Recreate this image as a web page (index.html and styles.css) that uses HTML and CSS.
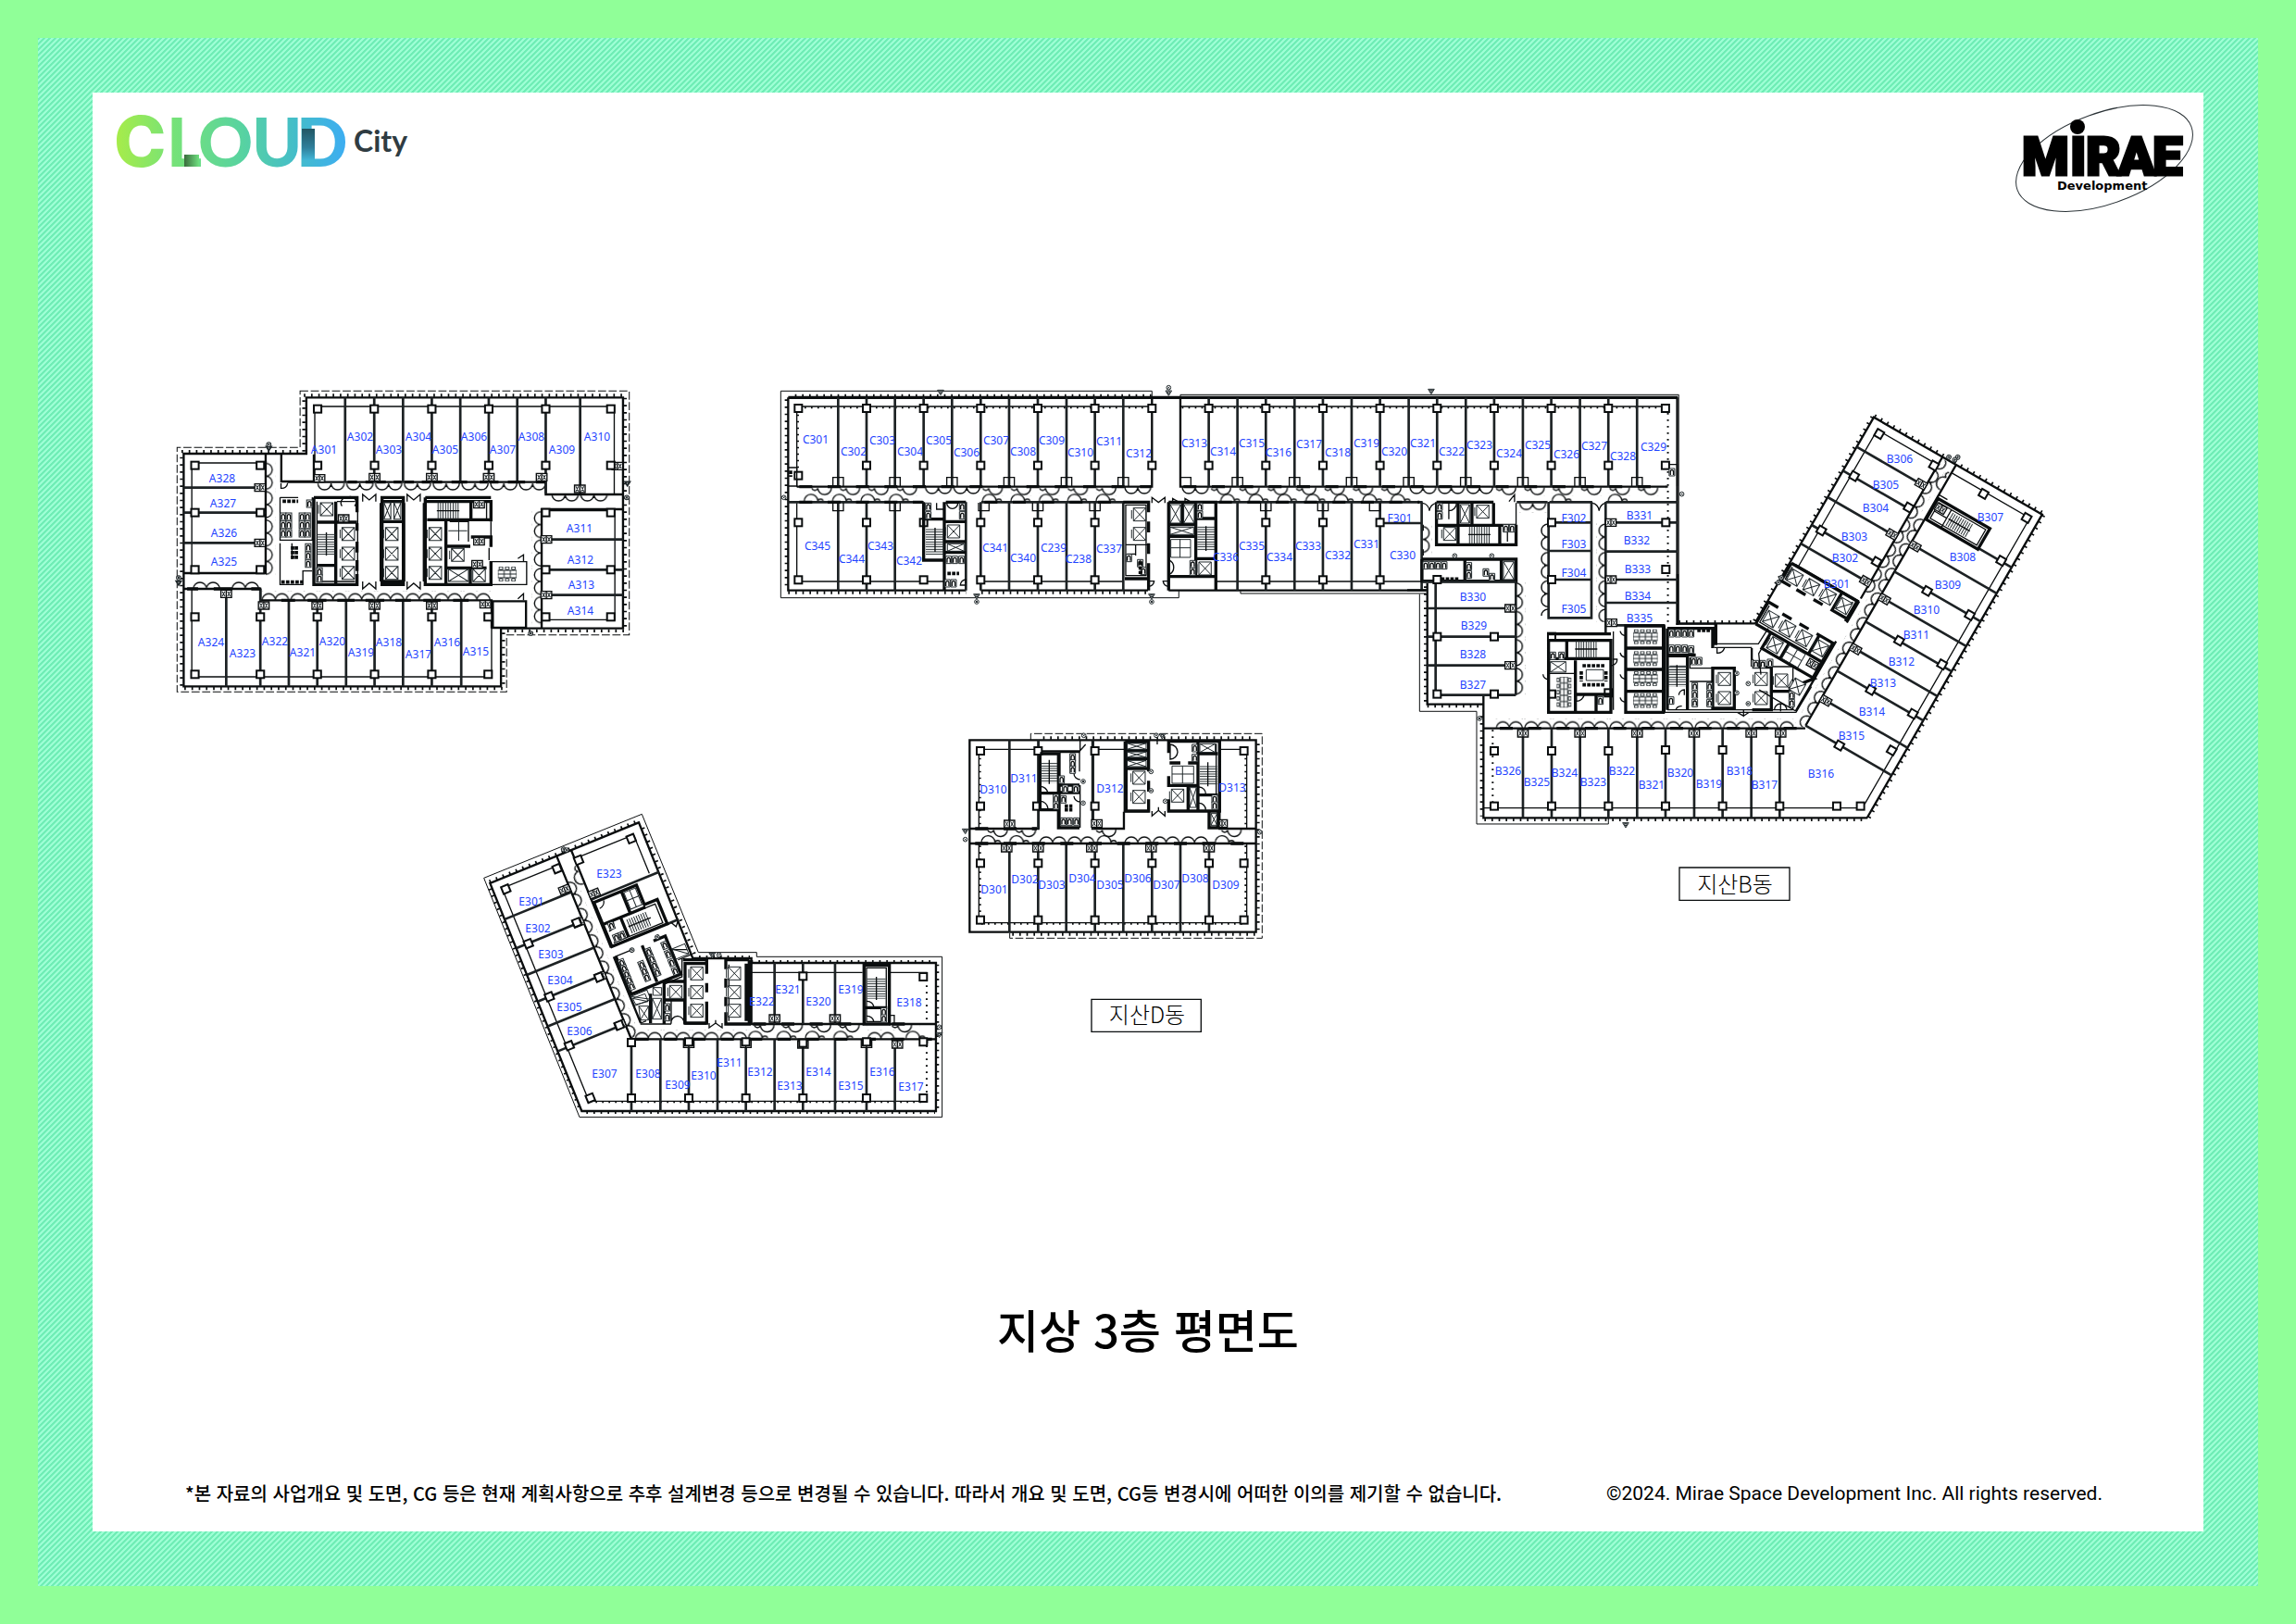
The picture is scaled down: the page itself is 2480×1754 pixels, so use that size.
FILE: index.html
```html
<!DOCTYPE html>
<html lang="ko">
<head>
<meta charset="utf-8">
<meta name="viewport" content="width=device-width, initial-scale=1">
<title>CLOUD City - 지상 3층 평면도</title>
<link rel="stylesheet" href="styles.css">
</head>
<body>
<div class="frame">
<main class="sheet">
<header class="brands">
<svg class="brand-cloud" viewBox="120 108 330 130" role="img" aria-label="CLOUD City">
<defs>
<linearGradient id="cloudFill" gradientUnits="userSpaceOnUse" x1="126" y1="0" x2="371" y2="0">
<stop offset="0" stop-color="#a6ec4a"/><stop offset=".25" stop-color="#76e278"/><stop offset=".55" stop-color="#58d3a0"/><stop offset=".8" stop-color="#43bccb"/><stop offset="1" stop-color="#3daef0"/>
</linearGradient>
<linearGradient id="foldL"><stop offset="0" stop-color="#3a6b3c"/><stop offset="1" stop-color="#6fe080"/></linearGradient>
<linearGradient id="foldD" x2="0" y2="1"><stop offset="0" stop-color="#215663"/><stop offset=".6" stop-color="#2f7f9b"/><stop offset="1" stop-color="#42b6d8"/></linearGradient>
</defs>
<text class="cloud-word" x="123 180 214 272 320" y="180" fill="url(#cloudFill)"><tspan class="wide">C</tspan>LOUD</text>
<rect x="199" y="167" width="16" height="13" fill="url(#foldL)"/>
<rect x="326" y="139" width="14" height="34" fill="url(#foldD)"/>
<text class="city-word" x="382" y="164">City</text>
</svg>
<svg class="brand-mirae" viewBox="2172 108 200 130" role="img" aria-label="MIRAE Development">
<ellipse class="orbit" cx="2273" cy="171" rx="100" ry="49" transform="rotate(-20 2273 171)"/>
<text class="mirae-word" x="2184 2236 2253 2288 2325" y="189">MIRAE</text>
<circle cx="2244" cy="137" r="8"/>
<text class="mirae-sub" x="2222" y="205">Development</text>
</svg>
</header>

<svg class="plan" viewBox="100 260 2280 1000" role="img" aria-label="지상 3층 평면도">
<defs>
<marker id="col" markerUnits="userSpaceOnUse" markerWidth="40" markerHeight="40" overflow="visible"><rect x="-12" y="-12" width="24" height="24" class="column"/></marker>
<marker id="shaft" markerUnits="userSpaceOnUse" markerWidth="40" markerHeight="40" overflow="visible"><path class="mid box" d="M-17-12H17V12H-17ZM0-12V12"/><path class="thin" d="M-13-8L-4 8M-4-8L-13 8M4-8L13 8M13-8L4 8"/></marker>
<marker id="nook" markerUnits="userSpaceOnUse" markerWidth="40" markerHeight="40" overflow="visible"><path class="mid" d="M-17 15V-13H17V15"/></marker>
<marker id="nookd" markerUnits="userSpaceOnUse" markerWidth="40" markerHeight="40" overflow="visible"><path class="mid" d="M-17-13V13H17V-13"/></marker>
<marker id="lift" markerUnits="userSpaceOnUse" markerWidth="60" markerHeight="60" overflow="visible"><path class="thin box" d="M-20-21H20V21H-20ZL20 21M20-21L-20 21M-26-14V14"/></marker>
<marker id="wc" markerUnits="userSpaceOnUse" markerWidth="40" markerHeight="40" overflow="visible"><path class="thin box" d="M-9-12H9V12H-9Z"/><path class="mid" d="M-5 9V-1A5 6 0 0 1 5-1V9"/></marker>
<marker id="gate" markerUnits="userSpaceOnUse" markerWidth="40" markerHeight="40" overflow="visible"><path class="thin box" d="M-10-8H10L0 8ZM-5-5H5L0 3Z"/></marker>
<marker id="valve" markerUnits="userSpaceOnUse" markerWidth="40" markerHeight="40" overflow="visible"><path class="thin box" d="M-7 0A7 7 0 1 1 7 0A7 7 0 1 1-7 0M-3-3L3 3M3-3L-3 3"/></marker>
<pattern id="dn" patternUnits="userSpaceOnUse" width="92" height="30"><path class="door" d="M3 0A21 21 0 0 0 45 0A21 21 0 0 0 87 0"/></pattern>
<pattern id="up" patternUnits="userSpaceOnUse" width="92" height="30"><path class="door" d="M3 30A21 21 0 0 1 45 30A21 21 0 0 1 87 30"/></pattern>
<pattern id="dns" patternUnits="userSpaceOnUse" width="92" height="30"><path class="door" d="M3 5A10 10 0 0 0 22 5A22 22 0 0 0 66 2"/></pattern>
<pattern id="ups" patternUnits="userSpaceOnUse" width="92" height="30"><path class="door" d="M6 28A22 22 0 0 1 50 26A10 10 0 0 1 68 26"/></pattern>
<pattern id="stH" patternUnits="userSpaceOnUse" width="8" height="8"><path class="thin" d="M0 4H8"/></pattern>
<pattern id="stV" patternUnits="userSpaceOnUse" width="8" height="8"><path class="thin" d="M4 0V8"/></pattern>
<pattern id="seats" patternUnits="userSpaceOnUse" width="20" height="48"><path class="thin" d="M4 5A6 5 0 1 1 16 5A6 5 0 1 1 4 5M4 43A6 5 0 1 1 16 43A6 5 0 1 1 4 43M0 12H20V36H0M0 24H20M0 12V36"/></pattern>
</defs>

<!-- Building A -->
<g transform="translate(170 400) scale(.338 .3333)">
<path class="eave dash" d="M456 67H1508V857H1116V1042H63V250H456Z"/>
<path class="fins" d="M468 81H1495V844H1106V1031H77V263H468Z"/>
<path class="wall" d="M476 88H1488V836H1098V1024H84V270H476Z"/>
<path class="mid" d="M503 362V117H1460V400M110 708V993H1068V745M344 300H110V656M1228 455H1462V808H1228"/>
<path class="wall" d="M396 272V360H500V272M415 362H1241V402H1488M346 270V657H84M84 708H329V745H1068V836M1072 748H1178V834H1072ZM1488 450H1228V836"/>
<path class="part" d="M600 88V362M693 88V362M785 88V362M877 88V362M968 88V362M1059 88V362M1150 88V362M1241 88V400M1351 88V400M220 708V1024M329 708V1024M420 745V1024M511 745V1024M603 745V1024M694 745V1024M785 745V1024M877 745V1024M971 745V1024M84 380H346M84 461H346M84 559H346M1228 548H1488M1228 646H1488M1228 728H1488"/>
<path class="pile" d="M608 362H638M665 362H690M700 362H730M755 362H780M790 362H820M845 362H872M880 362H910M940 362H990M1030 362H1055M1062 362H1090M1120 362H1175M1210 362H1240M396 745H440M480 745H510M515 745H540M575 745H630M665 745H690M700 745H725M760 745H810M850 745H875M880 745H905M945 745H995M95 708H130M180 708H240M300 708H330"/>
<path class="m-shaft" d="M518 350L694 346L877 346L1059 346L1228 346L1350 384L220 724L340 762L511 762L694 762L877 762L1048 758L328 380L328 559L1243 548L1243 728L1470 310"/>
<path class="m-col" d="M512 125L693 125L877 125L1059 125L1241 125L1449 125L512 308L694 308L877 308L1059 308L1241 308L1449 308L120 308L329 308L120 461L329 461L120 646L329 646L1241 461L1449 461L1241 646L1449 646L1241 799L1449 799L120 799L329 799L511 799L694 799L877 799L1057 799L120 985L329 985L511 985L694 985L877 985L1057 985"/>
<rect transform="translate(510 366)" width="728" height="30" fill="url(#dn)"/>
<rect transform="translate(1258 402)" width="184" height="30" fill="url(#dn)"/>
<rect transform="translate(332 715)" width="736" height="30" fill="url(#up)"/>
<rect transform="translate(112 678)" width="92" height="30" fill="url(#up)"/>
<rect transform="translate(236 678)" width="92" height="30" fill="url(#up)"/>
<rect transform="translate(346 664) rotate(-90)" width="368" height="30" fill="url(#dn)"/>
<rect transform="translate(1226 455) rotate(90)" width="368" height="30" fill="url(#dn)"/>
<path class="thick" d="M500 412H638V430M638 412V460M638 495V520M638 555V590M638 615V650M500 412V694H638V660M570 425V694M512 492H638M512 632H570M718 412H786V694H718ZM718 425H786M718 490H786M718 684H786M856 425H1066V490M856 412H1066M856 412V694H1066V618M862 484H1066M922 484V694M922 570H1000M922 640H1052M1002 425V484M1000 640V694M1002 540H1066V572"/>
<path class="mid" d="M510 425V684H632M574 425H632M640 430V684M712 430V684M790 430V684M850 430V684M392 412V550H495V412M392 412H450M392 560V694H465V650H495M430 560V612M392 550H495M1068 620H1180V694H1068ZM934 490H994V555M1066 490V540M1060 575V615M1052 425V484M590 440A18 18 0 0 1 608 412A18 18 0 0 1 630 440M656 425V402L677 420L698 402V425M798 425V402L819 420L840 402V425M656 684V708L677 690L698 708V684M798 684V708L819 690L840 708V684M395 366V382A18 18 0 0 0 416 366M1152 610L1170 598V618M1152 740L1170 724V745"/>
<path class="m-lift" d="M610 530L610 594L610 656L749 530L749 594L749 656L888 530L888 594L888 656L541 450L960 598L1028 664"/>
<path class="thin" d="M724 428H746V482H724ZL746 482M746 428L724 482M756 428H778V482H756ZL778 482M778 428L756 482M930 644H994V684H930ZL994 684M994 644L930 684M930 520H990M963 490V552"/>
<path class="m-shaft" d="M595 480L1028 434L1028 554L1022 628"/>
<path class="m-wc" d="M402 474L420 474L402 500L420 500L402 528L420 528L462 474L480 474L462 500L480 500L462 528L480 528L482 574L482 600L482 626L518 652L518 674L486 432"/>
<path class="beads" d="M400 424H450M396 686H465M432 570V612M444 570V612"/>
<rect transform="translate(893 428)" width="72" height="54" fill="url(#stV)"/><path class="mid" d="M893 455H965M540 525V600"/>
<rect transform="translate(510 528)" width="60" height="72" fill="url(#stH)"/>
<rect transform="translate(1088 636)" width="60" height="48" fill="url(#seats)"/>
<path class="m-gate" d="M356 254L68 690L1502 368"/><path class="m-valve" d="M356 240L68 672L1500 412L1193 852"/>
</g>

<!-- Building C and the link to B -->
<g transform="translate(830 400) scale(.3333)">
<path class="eave" d="M1243 84V67H40V737H1330V715M1335 84V79H2950V820M1530 715V723H2130"/>
<path class="fins" d="M86 82H1243M58 94V713M64 720H640M690 720H1230"/>
<path class="thick" d="M64 88H2947"/>
<path class="wall" d="M64 88V713H640M688 713H1230M1297 713H2131M2945 88V820M92 377H1243V88M1335 88V377H2915"/>
<path class="mid" d="M92 377V117H1243M1335 117H2915M92 430V684H570M688 684H1150M1450 684H2117"/>
<path class="facade" d="M2915 117V820M96 122V340M96 121H1243M1340 121H2910"/>
<path class="part" d="M64 427H503M690 427H1160M1454 427H2120M2425 427H2525M2531 427H2670M2714 427H2947M226 88V377M318 88V377M410 88V377M503 88V377M595 88V377M688 88V377M780 88V377M873 88V377M966 88V377M1058 88V377M1150 88V377M1427 88V377M1520 88V377M1612 88V377M1705 88V377M1797 88V377M1890 88V377M1982 88V377M2075 88V377M2167 88V377M2260 88V377M2352 88V377M2445 88V377M2537 88V377M2630 88V377M2722 88V377M2815 88V377M226 427V713M318 427V713M410 427V713M640 427V713M688 427V713M780 427V713M873 427V713M966 427V713M1058 427V713M1150 427V713M1520 427V713M1612 427V713M1705 427V713M1797 427V713M1890 427V713M1982 427V713M2117 427V713M1982 495H2117"/>
<path class="pile dashpile" d="M100 377H1240M1345 377H2910M100 427H500M700 427H1150M1460 427H2110"/>
<path class="m-nook" d="M226 360L410 360L595 360L780 360L966 360L1150 360L1352 360L1520 360L1705 360L1890 360L2075 360L2260 360L2445 360L2630 360L2815 360"/>
<path class="m-nookd" d="M226 442L410 442L698 442L873 442L1058 442L1612 442L1797 442L1965 442"/>
<path class="m-col" d="M97 123L318 123L503 123L688 123L873 123L1058 123L1243 123L1427 123L1612 123L1797 123L1982 123L2167 123L2352 123L2537 123L2722 123L2907 123L97 341L318 308L503 308L688 308L873 308L1058 308L1243 308L1427 308L1612 308L1797 308L1982 308L2167 308L2352 308L2537 308L2722 308L2907 308L97 493L318 493L503 493L688 493L873 493L1058 493L1612 493L1797 493L1982 493L97 679L318 679L503 679L688 679L873 679L1058 679L1612 679L1797 679L1982 679"/>
<rect transform="translate(138 377)" width="368" height="30" fill="url(#dns)"/>
<rect transform="translate(506 378)" width="184" height="30" fill="url(#dn)"/>
<rect transform="translate(692 377)" width="460" height="30" fill="url(#dns)"/>
<rect transform="translate(1152 378)" width="92" height="30" fill="url(#dn)"/>
<rect transform="translate(1338 378)" width="92" height="30" fill="url(#dn)"/>
<rect transform="translate(1432 377)" width="644" height="30" fill="url(#dns)"/>
<rect transform="translate(2076 378)" width="276" height="30" fill="url(#dn)"/>
<rect transform="translate(2356 377)" width="552" height="30" fill="url(#dns)"/>
<rect transform="translate(110 397)" width="368" height="30" fill="url(#ups)"/>
<rect transform="translate(688 397)" width="460" height="30" fill="url(#ups)"/>
<rect transform="translate(1460 397)" width="644" height="30" fill="url(#ups)"/>
<rect transform="translate(2534 397)" width="92" height="30" fill="url(#ups)"/>
<rect transform="translate(2716 397)" width="92" height="30" fill="url(#ups)"/>
<path class="thick" d="M503 427V615H570M570 427V713M508 482H570M575 427H640M575 490H640M575 555H640M575 590H640M1150 427H1232V460M1232 490V525M1232 560V595M1232 625V675H1155M1297 427H1450V713M1297 427V713M1297 500H1385M1297 538H1385M1385 427V668M1342 430V500M1385 480H1445M1385 610H1450M1297 668H1450M1232 675V713M2165 427H2350M2165 427V565H2423V500M2235 427V565M2280 427V500M2165 502H2423M2350 430V500M2370 502V565M2118 612H2423V683H2118V612M2257 612V683M2375 612V683"/>
<path class="mid" d="M1158 436H1224V665H1158ZM1158 565H1228M1190 565V600M1162 595H1190M66 315H92V375H66M2918 305H2945V375M2423 430V500M1243 430V412L1264 428L1285 412V430M1310 427V415L1330 427M1350 427V415L1370 427M2120 430A26 28 0 0 1 2142 455A26 28 0 0 1 2165 430M2400 425L2418 403V427M2670 430A24 28 0 0 1 2692 455A24 28 0 0 1 2714 430M545 430V450H570M578 430A18 18 0 0 0 596 448A18 18 0 0 0 614 430M1297 615A25 25 0 0 1 1297 662M640 690V678A18 18 0 0 0 622 696H640M2205 482V430M2205 455A25 25 0 0 0 2230 430M2395 555V520M1232 700A18 18 0 0 0 1250 683H1232M1297 700A18 18 0 0 1 1279 683H1297"/>
<path class="m-lift" d="M600 522L1203 467L1203 530L1415 642L2315 458L2208 530"/>
<path class="thin" d="M1302 435H1336V495H1302ZL1336 495M1336 435L1302 495M1346 435H1380V495H1346ZL1380 495M1380 435L1346 495M1302 508H1378V532H1302ZL1378 532M1378 508L1302 532M580 562H634V586H580ZL634 586M634 562L580 586M1304 548H1368V606H1304ZM1304 575H1368M1334 548V606M2242 435H2272V495H2242ZL2272 495M2272 435L2242 495M2382 620H2416V678H2382ZL2416 678M2416 620L2382 678"/>
<path class="m-wc" d="M518 442L518 470L628 442L628 470L584 614L604 614L626 614L580 690L600 690L1168 608L1205 625L1215 650L1398 442L1398 468L1375 628L1375 652L2175 442L2175 470L2130 632L2150 632L2170 632L2190 632L2270 635L2270 662L2390 512L2410 512L2325 655L2345 670L2928 330"/>
<path class="beads" d="M580 658H618M2165 676H2240M1205 620V660M72 325V345"/>
<rect transform="translate(510 512)" width="58" height="88" fill="url(#stH)"/><rect transform="translate(1390 504)" width="56" height="80" fill="url(#stH)"/><rect transform="translate(2268 506)" width="72" height="56" fill="url(#stV)"/>
<path class="mid" d="M540 510V588M1418 505V585M2268 532H2340M2122 500V520M2122 580V600"/>
<rect transform="translate(2120 503) rotate(90) scale(1 -1)" width="92" height="30" fill="url(#dn)"/>
<rect transform="translate(2432 430)" width="92" height="30" fill="url(#dn)"/>
<path class="m-gate" d="M558 72L1297 74L2148 69L675 733L1242 733"/><path class="m-valve" d="M1297 56L675 750L1242 750L2960 401L50 412"/>
</g>

<!-- Building B, lower wing -->
<g transform="translate(1520 520) scale(.3333)">
<path class="eave" d="M40 365V745H225V1110H652V1090"/>
<path class="fins" d="M59 340V722M65 728H240M241 760V1085M250 1096H1490M880 455H1130"/>
<path class="wall" d="M65 330V722H247M247 692V1090H1492M876 460H1130M876 300V465M250 800H1290M0 352H65"/>
<path class="part" d="M643 66V495M643 133H876M643 227H876M643 318H876M643 393H876M643 466H835M458 66V442H597V66M458 133H597M458 225H597M458 318H597M352 325V692M50 325H352M65 411H352M65 503H352M65 596H352M92 692H352M92 325V692M375 800V1090M468 800V1090M560 800V1090M652 800V1090M745 800V1090M837 800V1090M930 800V1090M1022 800V1090M1115 800V1090M1207 800V1090"/>
<path class="mid" d="M247 1058H1480"/><path class="facade" d="M277 805V1050"/>
<path class="pile dashpile" d="M300 800H1280"/>
<path class="m-shaft" d="M334 411L334 596L375 816L560 816L745 816L930 816L1115 816L1210 816L660 133L660 318L662 458"/>
<path class="m-col" d="M468 133L468 318L838 133L838 285L97 318L97 503L282 503L97 689L282 689L468 503L468 689L652 685L282 873L468 873L652 873L837 870L1022 870L1207 870L282 1052L468 1052L652 1052L837 1052L1022 1052L1207 1052L1392 1052L1469 1052"/>
<rect transform="translate(286 770)" width="966" height="30" fill="url(#up)"/>
<rect transform="translate(352 692) rotate(-90)" width="368" height="30" fill="url(#dn)"/>
<rect transform="translate(456 135) rotate(90)" width="300" height="30" fill="url(#dn)"/>
<rect transform="translate(643 135) rotate(90)" width="320" height="30" fill="url(#dn)"/>
<path class="thick" d="M458 494H660M458 515H660V748H458V515M460 574H660M545 580V748M545 690H660M517 515V574M612 690V748M708 468V748H830V468ZM708 540H830M708 609H830M708 680H830M843 476H990V540M843 476V740M843 562H935M908 562V740M990 605H1060V735H990ZM1118 602H1180V740H1118M1180 602V740M1185 680H1250M1000 462V530"/>
<path class="mid" d="M835 466V748H1260L1310 665M843 740H1250M1002 465V526H1138L1170 476M995 538H1115V600M460 622H540M843 568H908M916 570V605H990M916 648H990M1004 540V556A24 24 0 0 0 1028 540M1118 540V575A34 34 0 0 0 1140 590M1182 600H1250V740M1090 740V760L1070 748M1090 760L1108 748M665 576H680A18 18 0 0 1 662 596M690 485A20 20 0 0 0 708 500M690 555A20 20 0 0 0 708 570M690 625A20 20 0 0 0 708 640M690 700A20 20 0 0 0 708 715M440 625A18 18 0 0 0 458 642M548 690V712A26 26 0 0 0 574 690M1210 745V720A20 20 0 0 0 1190 740M1210 720A20 20 0 0 1 1230 740M870 740A20 20 0 0 1 890 728M880 692A18 18 0 0 1 898 675V692M668 486V740M1000 462H870"/>
<path class="m-lift" d="M1028 640L1028 702L1147 640L1147 702L1213 645"/>
<path class="thin" d="M464 584H514V618H464ZL514 618M514 584L464 618M580 610H636V645H580ZM850 598H906M850 610H906"/>
<path class="m-wc" d="M856 492L877 492L899 492L920 492L856 542L877 542L899 542L920 545L932 664L932 690L932 718L980 664L980 690L980 718L928 582L946 582L855 710L626 710L1246 692L1246 718L472 565L500 565L1130 592L1152 592L1176 588"/>
<path class="beads" d="M940 483H985M568 597H640M568 659H640"/>
<path class="beads" d="M564 615V648M644 615V648"/>
<rect transform="translate(544 516)" width="72" height="56" fill="url(#stV)"/><rect transform="translate(845 598)" width="60" height="66" fill="url(#stH)"/><path class="mid" d="M544 543H616M874 595V665"/>
<rect transform="translate(732 479)" width="80" height="48" fill="url(#seats)"/><rect transform="translate(732 550)" width="80" height="48" fill="url(#seats)"/><rect transform="translate(732 615)" width="80" height="48" fill="url(#seats)"/><rect transform="translate(732 686)" width="80" height="48" fill="url(#seats)"/>
<rect transform="translate(532 633) rotate(90)" width="100" height="48" fill="url(#seats)"/>
<path class="m-gate" d="M708 1114"/><path class="m-valve" d="M234 768L154 241L274 241L1068 622L1068 685L1105 655L1105 720"/>
</g>

<!-- Building B, diagonal wing -->
<g transform="translate(2024 450.67) scale(.3333) rotate(30)">
<path class="fins" d="M0-6H630M636 0V1134M-6 765V0"/>
<path class="wall" d="M0 765V0H630V1134M257 0V530M308 0V976M257 540V620M257 690V951"/>
<path class="mid" d="M30 540V30H257M308 30H601V1100"/>
<path class="part" d="M0 111H257M0 200H257M0 299H257M0 403H257M0 473H257M506 198H630M308 295H630M308 400H630M308 493H630M308 587H630M308 680H630M308 771H630M308 873H630M308 976H630"/>
<path class="thick" d="M312 124H506V202H312ZM5 543H251V619M5 543V609H40M62 609H96M126 609H160M190 609H251M3 771V689H40M62 700H96M126 700H160M190 700H251V771H3M200 700V771M195 543V610M60 771V830H200M128 771V830M200 771H251V840M130 830H256L200 900"/>
<path class="mid" d="M322 134H496V192H322ZM14 552V600M240 552V600M12 698V760H190M368 134V200M322 165H368M308 200H506M310 112H340M257 540H20M60 790V850L100 905M257 951L120 951"/>
<path class="m-lift" d="M38 578L100 578L162 578L222 578L38 733L100 733L162 733L224 735L92 800L222 880"/>
<path class="thin" d="M132 776H192V826H132ZM132 800H192M162 776V826"/>
<path class="m-shaft" d="M241 111L241 299L243 473L324 295L324 493L324 680L324 873L228 792L336 148"/>
<path class="m-col" d="M42 38L247 38L40 197L244 197L36 403L242 401L432 37L592 35L590 196L590 400L592 583L590 769L590 906L431 401L433 586L433 770L435 977"/>
<rect transform="translate(374 140)" width="80" height="48" fill="url(#stV)"/><path class="mid" d="M374 164H454"/>
<rect transform="translate(257 505) rotate(-90)" width="500" height="30" fill="url(#dn)"/>
<rect transform="translate(306 205) rotate(90)" width="780" height="30" fill="url(#dn)"/>
<rect transform="translate(306 30) rotate(90)" width="92" height="30" fill="url(#dns)"/>
<path class="m-valve" d="M300-24L296-12L0 600L0 618L275-10"/>
</g>

<!-- Building D -->
<g transform="translate(1030 780) scale(.3333)">
<path class="eave dash" d="M250 60V37H1000V700H182V680"/>
<path class="fins" d="M290 51H975M987 70V680M190 687H980"/>
<path class="wall" d="M52 58H980V680H52ZM52 345H275V58M450 58V345H552V290M862 58V345H980M52 393H980M275 94H410"/>
<path class="mid" d="M82 345V88H275M82 393V650H950V393M455 88H552M862 88H950V345"/>
<path class="facade" d="M86 95V340M86 400V640M946 95V340M946 400V640M90 653H940"/>
<path class="part" d="M181 58V345M275 58V345M452 58V345M181 393V680M274 393V680M365 393V680M458 393V680M550 393V680M643 393V680M735 393V680M828 393V680"/>
<path class="pile dashpile" d="M70 393H970M70 345H270"/>
<path class="m-shaft" d="M181 330L172 408L274 408L448 408L640 408L828 408M464 328L870 328"/>
<path class="m-col" d="M87 93L274 93L458 93L941 93L87 272L270 272L458 272L87 457L274 457L458 457L643 457L828 457L941 457L87 641L274 641L458 641L643 641L828 641L941 641"/>
<rect transform="translate(108 345)" width="184" height="30" fill="url(#dns)"/><rect transform="translate(460 345)" width="92" height="30" fill="url(#dns)"/><rect transform="translate(866 345)" width="92" height="30" fill="url(#dns)"/>
<rect transform="translate(84 363)" width="184" height="30" fill="url(#ups)"/><rect transform="translate(276 363)" width="184" height="30" fill="url(#up)"/><rect transform="translate(460 363)" width="92" height="30" fill="url(#ups)"/><rect transform="translate(552 363)" width="276" height="30" fill="url(#up)"/><rect transform="translate(842 363)" width="92" height="30" fill="url(#ups)"/>
<path class="thick" d="M280 102H340V342H408M280 102V284H340M280 230H340M345 204H408M345 228H408M556 62H632V160M632 190V225M632 250V288H556V62M556 92H632M556 118H632M556 150H632M697 100V62H862V288H697V250M697 175V205H792M792 62V288M760 205V288M700 132H735M760 132H792M792 102H856M792 236H856M828 290V342H858V290"/>
<path class="mid" d="M345 98H408V160M410 204V342M345 98V342M410 60V92L428 72M562 288V68H626M552 290H632M643 288V304L664 286L685 304V288M664 286V275M702 72V120A25 25 0 0 0 726 97A25 25 0 0 0 702 72M851 70V282M390 166A20 20 0 0 0 410 186M390 240A20 20 0 0 0 410 258M280 208A26 26 0 0 1 306 230M280 256A26 26 0 0 1 306 280M795 210A22 22 0 0 1 817 234M795 262A22 22 0 0 1 817 284M385 228V205"/>
<path class="m-lift" d="M601 180L601 242L726 238"/>
<path class="thin" d="M562 68H624V88H562ZL624 88M624 68L562 88M562 96H624V114H562ZL624 114M624 96L562 114M562 124H624V144H562ZL624 144M624 124L562 144M765 212H787V276H765ZL787 276M787 212L765 276M798 70H848V98H798ZL848 98M848 70L798 98M834 296H854V334H834ZL854 334M854 296L834 334M708 142H778V198H708ZM708 168H778M742 142V198"/>
<path class="m-wc" d="M386 114L386 134L386 154L396 216L356 250L356 322L376 322L398 322L332 246L332 270L350 186L362 216L846 248L846 270L782 84L782 116"/>
<path class="beads" d="M360 272H385M360 284H385"/>
<rect transform="translate(282 130)" width="54" height="66" fill="url(#stH)"/><rect transform="translate(798 140)" width="56" height="64" fill="url(#stH)"/><path class="mid" d="M310 122V200M824 130V208M660 72V60"/>
<path class="m-gate" d="M38 354L676 46"/><path class="m-valve" d="M422 43L657 43L38 380L992 356L420 192L420 262L640 160L640 222L686 256"/>
<path class="tag" d="M447 898H802V1003H447Z"/>
</g>

<!-- Building E -->
<g transform="translate(510 860) scale(.3333)">
<path class="eave" d="M348 1040H1523V520H922V506H733L550 58L38 265Z"/>
<path class="fins" d="M370 1024H1500M1508 545V1016M905 536H1500M735 521H900"/>
<path class="wall" d="M355 1020H1503V540H905V525H715L540 85L58 282ZM905 525V738H1270M1350 738H1503M515 787H1503"/>
<path class="mid" d="M905 571H1265M1355 571H1475M395 988H1475M1475 787V800"/>
<path class="facade" d="M1473 571V738M1473 787V988M400 991H1470"/>
<path class="part" d="M980 540V738M1072 540V738M1176 540V738M516 787V1020M610 787V1020M702 787V1020M795 787V1020M887 787V1020M980 787V1020M1072 787V1020M1176 787V1020M1278 787V1020M1370 787V1020"/>
<path class="pile dashpile" d="M530 787H1490M910 738H1265M1360 738H1440"/>
<path class="m-shaft" d="M980 720L1176 720L702 802L887 802L1072 804L1278 802L1378 804"/>
<path class="m-col" d="M1072 583L1462 585L516 798L702 796L887 796L1072 800L1278 796L1462 796L516 978L702 978L887 978L1072 978L1278 978L1462 978"/>
<rect transform="translate(526 757)" width="368" height="30" fill="url(#up)"/><rect transform="translate(890 757)" width="368" height="30" fill="url(#ups)"/><rect transform="translate(1280 757)" width="92" height="30" fill="url(#up)"/><rect transform="translate(1400 757)" width="92" height="30" fill="url(#ups)"/>
<rect transform="translate(912 738)" width="368" height="30" fill="url(#dns)"/><rect transform="translate(1358 738)" width="92" height="30" fill="url(#dns)"/>
<path class="thick" d="M683 530H760V575M760 605V635M760 665V735H690V542H755M898 530V738H822V700M822 560V530H898M822 590V620M822 650V680M888 542V728M1270 542V738H1352V542M1270 548H1352M1270 685H1345M622 600V738M622 600H688M622 660H688M578 640L578 735"/>
<path class="mid" d="M680 525V585L620 610V735M545 738H645M688 738H760M768 735V750L789 735L810 750V735M789 735V725M1278 556H1342V730H1278ZM832 545V728M645 660V735M686 660V735M645 738A22 22 0 0 1 666 712A22 22 0 0 1 686 738M1280 712A22 22 0 0 1 1302 732M1280 664A22 22 0 0 1 1302 684M1354 710H1368V738"/>
<path class="m-lift" d="M728 574L728 635L728 695L850 574L850 635L850 695L660 634"/>
<path class="thin" d="M584 655H614V722H584ZL614 722M614 655L584 722M540 680H572V725H545ZL572 725M572 680L545 725M586 620H614V645H586ZL614 645M520 655L560 640L570 665L530 675ZL570 665"/>
<path class="m-wc" d="M632 684L632 716L1334 698L1334 720"/>
<rect transform="translate(1280 588)" width="60" height="68" fill="url(#stH)"/><path class="mid" d="M1310 585V660"/>
<path class="m-gate" d="M778 516L1514 774"/><path class="m-valve" d="M800 514L1514 748"/>
<g transform="translate(58 282) rotate(-22.2)">
<path class="fins" d="M0-6H521M-7 780V0M527 20V470"/>
<path class="wall" d="M233 0V638M284 0V341M281 372V604"/>
<path class="mid" d="M30 770V30H225M290 30H490V165"/>
<path class="part" d="M0 126H233M0 227H233M0 320H233M0 413H233M0 500H233M0 587H233M284 173H521M480 339H521"/>
<path class="thick" d="M288 185H437V253H482V339H288ZM384 185V262H437M288 262H384M350 262V330M288 373V506H461V373H420M380 373V500"/>
<path class="mid" d="M298 330H470V264H430M284 373H340M298 290A24 24 0 0 0 322 262M298 210A24 24 0 0 0 320 190M521 339L505 358L495 339M461 420L510 440M470 460H521M281 604L300 604"/>
<path class="thin" d="M390 192H430V250H390ZM390 220H430M410 192V250M465 420H510V455H465ZL510 455M284 512H340V545H284ZL340 545"/>
<rect transform="translate(362 276)" width="72" height="48" fill="url(#stV)"/><path class="mid" d="M362 300H440"/>
<path class="m-wc" d="M298 400L298 420L298 440L298 460L298 482L355 430L355 452L355 474L392 400L392 424L392 448L392 472L448 400L448 430L448 460L448 490L312 276L312 318L332 318"/>
<path class="m-shaft" d="M216 110L217 226L217 415L217 584L300 158"/>
<path class="m-col" d="M40 37L219 38L294 39L478 39L41 228L39 413L39 584L38 767L212 224L212 415L214 584"/>
<rect transform="translate(233 640) rotate(-90)" width="552" height="30" fill="url(#dn)"/>
<rect transform="translate(284 50) rotate(90)" width="92" height="30" fill="url(#dns)"/>
<path class="m-valve" d="M262-12L270-6L344 374L436 366"/>
</g>
</g>
<path class="tag" transform="translate(1814 937) scale(.3333)" d="M0 0H357V106H0Z"/>

<g class="tag-name"><text x="1239" y="1105">지산D동</text><text x="1874" y="964">지산B동</text></g>

<g class="unit">
<text x="350" y="490">A301</text><text x="389" y="476">A302</text><text x="420" y="490">A303</text><text x="452" y="476">A304</text><text x="481" y="490">A305</text><text x="512" y="476">A306</text><text x="543" y="490">A307</text><text x="574" y="476">A308</text><text x="607" y="490">A309</text><text x="645" y="476">A310</text>
<text x="626" y="575">A311</text><text x="627" y="609">A312</text><text x="628" y="636">A313</text><text x="627" y="664">A314</text><text x="514" y="708">A315</text><text x="483" y="698">A316</text><text x="452" y="711">A317</text><text x="420" y="698">A318</text><text x="390" y="709">A319</text><text x="359" y="697">A320</text><text x="327" y="709">A321</text><text x="297" y="697">A322</text><text x="262" y="710">A323</text><text x="228" y="698">A324</text><text x="242" y="611">A325</text><text x="242" y="580">A326</text><text x="241" y="548">A327</text><text x="240" y="521">A328</text>
<text x="881" y="479">C301</text><text x="922" y="492">C302</text><text x="953" y="480">C303</text><text x="983" y="492">C304</text><text x="1014" y="480">C305</text><text x="1044" y="493">C306</text><text x="1076" y="480">C307</text><text x="1105" y="492">C308</text><text x="1136" y="480">C309</text><text x="1167" y="493">C310</text><text x="1198" y="481">C311</text><text x="1230" y="494">C312</text>
<text x="883" y="594">C345</text><text x="920" y="608">C344</text><text x="951" y="594">C343</text><text x="982" y="610">C342</text><text x="1075" y="596">C341</text><text x="1105" y="607">C340</text><text x="1138" y="596">C239</text><text x="1165" y="608">C238</text><text x="1198" y="597">C337</text>
<text x="1290" y="483">C313</text><text x="1321" y="492">C314</text><text x="1352" y="483">C315</text><text x="1381" y="493">C316</text><text x="1414" y="484">C317</text><text x="1445" y="493">C318</text><text x="1476" y="483">C319</text><text x="1506" y="492">C320</text><text x="1537" y="483">C321</text><text x="1568" y="492">C322</text><text x="1598" y="485">C323</text><text x="1630" y="494">C324</text><text x="1661" y="485">C325</text><text x="1692" y="495">C326</text><text x="1722" y="486">C327</text><text x="1753" y="497">C328</text><text x="1786" y="487">C329</text>
<text x="1324" y="606">C336</text><text x="1352" y="594">C335</text><text x="1382" y="606">C334</text><text x="1413" y="594">C333</text><text x="1445" y="604">C332</text><text x="1476" y="592">C331</text><text x="1515" y="604">C330</text>
<text x="1512" y="564">F301</text><text x="1700" y="564">F302</text><text x="1700" y="592">F303</text><text x="1700" y="623">F304</text><text x="1700" y="662">F305</text>
<text x="1771" y="561">B331</text><text x="1768" y="588">B332</text><text x="1769" y="619">B333</text><text x="1769" y="648">B334</text><text x="1771" y="672">B335</text><text x="1591" y="649">B330</text><text x="1592" y="680">B329</text><text x="1591" y="711">B328</text><text x="1591" y="744">B327</text>
<text x="1629" y="837">B326</text><text x="1660" y="849">B325</text><text x="1690" y="839">B324</text><text x="1721" y="849">B323</text><text x="1752" y="837">B322</text><text x="1784" y="852">B321</text><text x="1815" y="839">B320</text><text x="1846" y="851">B319</text><text x="1879" y="837">B318</text><text x="1906" y="852">B317</text><text x="1967" y="840">B316</text>
<text x="2052" y="500">B306</text><text x="2037" y="528">B305</text><text x="2026" y="553">B304</text><text x="2003" y="584">B303</text><text x="1993" y="607">B302</text><text x="1984" y="635">B301</text><text x="2150" y="563">B307</text><text x="2120" y="606">B308</text><text x="2104" y="636">B309</text><text x="2081" y="663">B310</text><text x="2070" y="690">B311</text><text x="2054" y="719">B312</text><text x="2034" y="742">B313</text><text x="2022" y="773">B314</text><text x="2000" y="799">B315</text>
<text x="1074" y="965">D301</text><text x="1107" y="954">D302</text><text x="1136" y="960">D303</text><text x="1169" y="953">D304</text><text x="1199" y="960">D305</text><text x="1229" y="953">D306</text><text x="1260" y="960">D307</text><text x="1291" y="953">D308</text><text x="1324" y="960">D309</text><text x="1073" y="857">D310</text><text x="1106" y="845">D311</text><text x="1199" y="856">D312</text><text x="1331" y="855">D313</text>
<text x="574" y="978">E301</text><text x="581" y="1007">E302</text><text x="595" y="1035">E303</text><text x="605" y="1063">E304</text><text x="615" y="1092">E305</text><text x="626" y="1118">E306</text><text x="653" y="1164">E307</text><text x="700" y="1164">E308</text><text x="732" y="1176">E309</text><text x="760" y="1166">E310</text><text x="788" y="1152">E311</text><text x="821" y="1162">E312</text><text x="853" y="1177">E313</text><text x="884" y="1162">E314</text><text x="919" y="1177">E315</text><text x="953" y="1162">E316</text><text x="984" y="1178">E317</text><text x="982" y="1087">E318</text><text x="919" y="1073">E319</text><text x="884" y="1086">E320</text><text x="851" y="1073">E321</text><text x="823" y="1086">E322</text><text x="658" y="948">E323</text>
</g>
</svg>

<h1 class="title">지상 3층 평면도</h1>
<footer class="notes">
<p class="disclaimer">*본 자료의 사업개요 및 도면, CG 등은 현재 계획사항으로 추후 설계변경 등으로 변경될 수 있습니다. 따라서 개요 및 도면, CG등 변경시에 어떠한 이의를 제기할 수 없습니다.</p>
<p class="copyright">©2024. Mirae Space Development Inc. All rights reserved.</p>
</footer>
</main>
</div>
</body>
</html>
```
FILE: styles.css
```css
* { box-sizing: border-box; }

body {
  margin: 0;
  padding: 41px;
  background: #90ff98;
  color: #000;
  font-family: "Noto Sans CJK KR", "Noto Sans", sans-serif;
}

.frame {
  padding: 59px;
  background-color: #9cffd6;
  background-image: linear-gradient(135deg, #70edb6 0 17%, #9cffd4 17% 50%, #70edb6 50% 67%, #9cffd4 67%);
  background-size: 6px 6px;
}

.sheet {
  padding-bottom: 26px;
  background: #fff;
}

.brands {
  display: flex;
  justify-content: space-between;
  padding: 8px 8px 22px 20px;
}

.brand-cloud { width: 330px; height: 130px; }
.brand-mirae { width: 200px; height: 130px; }

.cloud-word { font: 900 73px Lato, sans-serif; }
.cloud-word .wide { font: 800 76px Inter, sans-serif; }

.city-word {
  font: 700 32px Lato, sans-serif;
  fill: #2f3c42;
}

.orbit { fill: none; stroke: #2a3236; stroke-width: 1px; }

.mirae-word {
  font: 900 58px Roboto, sans-serif;
  stroke: #000;
  stroke-width: 3px;
}

.mirae-sub { font: 700 13px "DejaVu Sans", sans-serif; }

.plan {
  display: block;
  width: 100%;
  height: auto;
}

.wall, .part, .mid, .thin, .thick, .eave, .fins, .facade, .pile, .door, .beads, .tag { fill: none; stroke: #0a0d0e; }
.wall { stroke-width: 7px; }
.part { stroke: #1d2224; stroke-width: 8px; }
.mid { stroke-width: 4px; }
.thin { stroke: #20282b; stroke-width: 3px; }
.thick { stroke-width: 10px; }
.eave { stroke-width: 3px; }
.dash { stroke-dasharray: 26 8; }
.fins { stroke-width: 10px; stroke-dasharray: 5 18; }
.facade { stroke-width: 6px; stroke-dasharray: 5 16; }
.pile { stroke-width: 10px; }
.dashpile { stroke-dasharray: 42 50; }
.door { stroke-width: 4px; }
.beads { stroke-width: 11px; stroke-dasharray: 11 4; }
.box { fill: #fff; }
.column { fill: #fff; stroke: #0a0d0e; stroke-width: 6px; }
.tag { stroke-width: 4px; }

.m-col, .m-shaft, .m-lift, .m-wc, .m-nook, .m-nookd, .m-gate, .m-valve { fill: none; stroke: none; }
.m-col { marker: url("#col"); }
.m-shaft { marker: url("#shaft"); }
.m-lift { marker: url("#lift"); }
.m-wc { marker: url("#wc"); }
.m-nook { marker: url("#nook"); }
.m-nookd { marker: url("#nookd"); }
.m-gate { marker: url("#gate"); }
.m-valve { marker: url("#valve"); }

.unit {
  font: 400 12px "Noto Sans", sans-serif;
  fill: #1f44ff;
  text-anchor: middle;
}

.tag-name {
  font: 300 24px "Noto Sans CJK KR", sans-serif;
  text-anchor: middle;
}

.title {
  margin: 145px 0 133px;
  font-size: 49px;
  font-weight: 500;
  line-height: 60px;
  text-align: center;
}

.notes {
  display: flex;
  justify-content: space-between;
  gap: 24px;
  padding: 0 109px 0 100px;
  line-height: 30px;
}

.notes p { margin: 0; }
.disclaimer { font-size: 20px; font-weight: 500; }
.copyright { font-family: Roboto, sans-serif; font-size: 21px; }
```
